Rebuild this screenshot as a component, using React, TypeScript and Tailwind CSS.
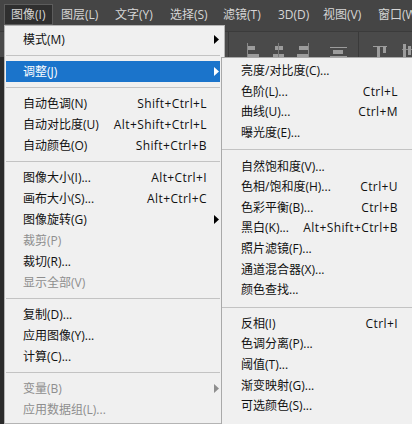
import React from 'react';

type Item =
  | { type: 'sep' }
  | { type: 'item'; label: string; shortcut?: string; disabled?: boolean; sub?: boolean; active?: boolean };

const menuBar = [
  { label: '图像(I)', w: 'w-[51px]' },
  { label: '图层(L)', w: 'w-[54px]' },
  { label: '文字(Y)', w: 'w-[55px]' },
  { label: '选择(S)', w: 'w-[53px]' },
  { label: '滤镜(T)', w: 'w-[55px]' },
  { label: '3D(D)', w: 'w-[45px]' },
  { label: '视图(V)', w: 'w-[55px]' },
  { label: '窗口(W)', w: 'w-[60px]' },
];

const mainItems: Item[] = [
  { type: 'item', label: '模式(M)', sub: true },
  { type: 'sep' },
  { type: 'item', label: '调整(J)', sub: true, active: true },
  { type: 'sep' },
  { type: 'item', label: '自动色调(N)', shortcut: 'Shift+Ctrl+L' },
  { type: 'item', label: '自动对比度(U)', shortcut: 'Alt+Shift+Ctrl+L' },
  { type: 'item', label: '自动颜色(O)', shortcut: 'Shift+Ctrl+B' },
  { type: 'sep' },
  { type: 'item', label: '图像大小(I)...', shortcut: 'Alt+Ctrl+I' },
  { type: 'item', label: '画布大小(S)...', shortcut: 'Alt+Ctrl+C' },
  { type: 'item', label: '图像旋转(G)', sub: true },
  { type: 'item', label: '裁剪(P)', disabled: true },
  { type: 'item', label: '裁切(R)...' },
  { type: 'item', label: '显示全部(V)', disabled: true },
  { type: 'sep' },
  { type: 'item', label: '复制(D)...' },
  { type: 'item', label: '应用图像(Y)...' },
  { type: 'item', label: '计算(C)...' },
  { type: 'sep' },
  { type: 'item', label: '变量(B)', sub: true, disabled: true },
  { type: 'item', label: '应用数据组(L)...', disabled: true },
];

const subItems: Item[] = [
  { type: 'item', label: '亮度/对比度(C)...' },
  { type: 'item', label: '色阶(L)...', shortcut: 'Ctrl+L' },
  { type: 'item', label: '曲线(U)...', shortcut: 'Ctrl+M' },
  { type: 'item', label: '曝光度(E)...' },
  { type: 'sep' },
  { type: 'item', label: '自然饱和度(V)...' },
  { type: 'item', label: '色相/饱和度(H)...', shortcut: 'Ctrl+U' },
  { type: 'item', label: '色彩平衡(B)...', shortcut: 'Ctrl+B' },
  { type: 'item', label: '黑白(K)...', shortcut: 'Alt+Shift+Ctrl+B' },
  { type: 'item', label: '照片滤镜(F)...' },
  { type: 'item', label: '通道混合器(X)...' },
  { type: 'item', label: '颜色查找...' },
  { type: 'sep' },
  { type: 'item', label: '反相(I)', shortcut: 'Ctrl+I' },
  { type: 'item', label: '色调分离(P)...' },
  { type: 'item', label: '阈值(T)...' },
  { type: 'item', label: '渐变映射(G)...' },
  { type: 'item', label: '可选颜色(S)...' },
];

const Arrow = ({ color }: { color: string }) => (
  <svg width="5" height="9" viewBox="0 0 5 9" className="block">
    <path d="M0 0 L5 4.5 L0 9 Z" fill={color} />
  </svg>
);

const ToolbarIcons = () => (
  <svg width="187" height="26" viewBox="0 0 187 26" className="block">
    <rect x="3" y="0" width="1" height="26" fill="#3a3a3a" />
    {/* align left */}
    <rect x="22" y="11" width="1" height="15" fill="#8a8a8a" />
    <rect x="23" y="14" width="7" height="4" fill="#9c9c9c" />
    <rect x="23" y="22" width="11" height="3" fill="#9c9c9c" />
    {/* align center */}
    <rect x="50" y="14" width="8" height="4" fill="#9c9c9c" />
    <rect x="48" y="22" width="11" height="3" fill="#9c9c9c" />
    <rect x="53" y="11" width="1" height="15" fill="#7a7a7a" />
    {/* align right */}
    <rect x="83" y="11" width="1" height="15" fill="#8a8a8a" />
    <rect x="74" y="14" width="9" height="4" fill="#9c9c9c" />
    <rect x="72" y="22" width="11" height="3" fill="#9c9c9c" />
    {/* distribute */}
    <rect x="105" y="15" width="17" height="1" fill="#9c9c9c" />
    <rect x="108" y="18" width="10" height="4" fill="#9c9c9c" />
    <rect x="105" y="24" width="17" height="1" fill="#9c9c9c" />
    <rect x="133" y="0" width="1" height="26" fill="#3a3a3a" />
    {/* align top */}
    <rect x="148" y="14" width="14" height="1" fill="#9c9c9c" />
    <rect x="152" y="15" width="3" height="11" fill="#9c9c9c" />
    <rect x="158" y="15" width="3" height="6" fill="#9c9c9c" />
    {/* align middle */}
    <rect x="177" y="17" width="10" height="1" fill="#8a8a8a" />
    <rect x="178" y="12" width="3" height="14" fill="#9c9c9c" />
    <rect x="183" y="14" width="3" height="9" fill="#9c9c9c" />
  </svg>
);

const MenuRows = ({ items, sub }: { items: Item[]; sub?: boolean }) => (
  <>
    {items.map((it, i) => {
      if (it.type === 'sep') {
        return (
          <div key={i} className={`${sub ? 'h-[13px]' : 'h-[11px] ml-[1px] mr-[4px]'} flex items-center`}>
            <div className="h-px w-full bg-[#c3c3c3]" />
          </div>
        );
      }
      const color = it.active ? 'text-white' : it.disabled ? 'text-[#8e8e8e]' : 'text-[#111]';
      if (sub) {
        return (
          <div key={i} className={`h-[20.6px] flex items-center pl-[19px] pr-[14px] ${color}`}>
            <span className="flex-1 whitespace-nowrap">{it.label}</span>
            {it.shortcut && <span className="whitespace-nowrap tracking-[0.4px]">{it.shortcut}</span>}
          </div>
        );
      }
      return (
        <div
          key={i}
          className={`h-[21px] flex items-center ${color} ${
            it.active ? 'bg-[#1b74cb] ml-[1px] mr-[4px] pl-[17px]' : 'pl-[18px]'
          }`}
        >
          <span className="flex-1 whitespace-nowrap">{it.label}</span>
          {it.shortcut && <span className="whitespace-nowrap tracking-[0.4px]">{it.shortcut}</span>}
          <div className={`${it.active ? 'w-[13px]' : 'w-[17px]'} pl-[7px] flex items-center`}>
            {it.sub && <Arrow color={it.active ? '#ffffff' : it.disabled ? '#8e8e8e' : '#000000'} />}
          </div>
        </div>
      );
    })}
  </>
);

export default function App() {
  return (
    <div className="relative w-[412px] h-[424px] overflow-hidden bg-[#2b2b2b] text-[12px] leading-none font-['Open_Sans','Noto_Sans_CJK_SC',sans-serif]">
      {/* menu bar */}
      <div className="h-[31px] bg-[#454545] flex items-start pl-[4px] pt-[4px]">
        {menuBar.map((m, i) => (
          <div key={m.label} className={`${m.w} shrink-0`}>
            <div
              className={`h-[21px] flex items-center pl-[6px] whitespace-nowrap text-[#d6d6d6] ${
                i === 0 ? 'w-[49px] bg-[#2f2f2f] border border-[#5c5c5c] pl-[5px]' : ''
              }`}
            >
              {m.label}
            </div>
          </div>
        ))}
      </div>

      {/* options toolbar */}
      <div className="h-[26px] bg-[#4a4a4a] border-t border-[#3b3b3b] flex">
        <div className="w-[225px] shrink-0" />
        <ToolbarIcons />
      </div>

      {/* image menu */}
      <div className="absolute left-[4px] top-[25px] w-[221px] bottom-0 bg-[#f0f0f0] border border-[#b4b4b4] pt-[3px]">
        <MenuRows items={mainItems} />
      </div>

      {/* adjustments submenu */}
      <div className="absolute left-[221px] top-[57px] right-0 bottom-0 bg-[#f0f0f0] border-l border-t border-[#a9a9a9] pt-[3px]">
        <MenuRows items={subItems} sub />
      </div>
    </div>
  );
}
